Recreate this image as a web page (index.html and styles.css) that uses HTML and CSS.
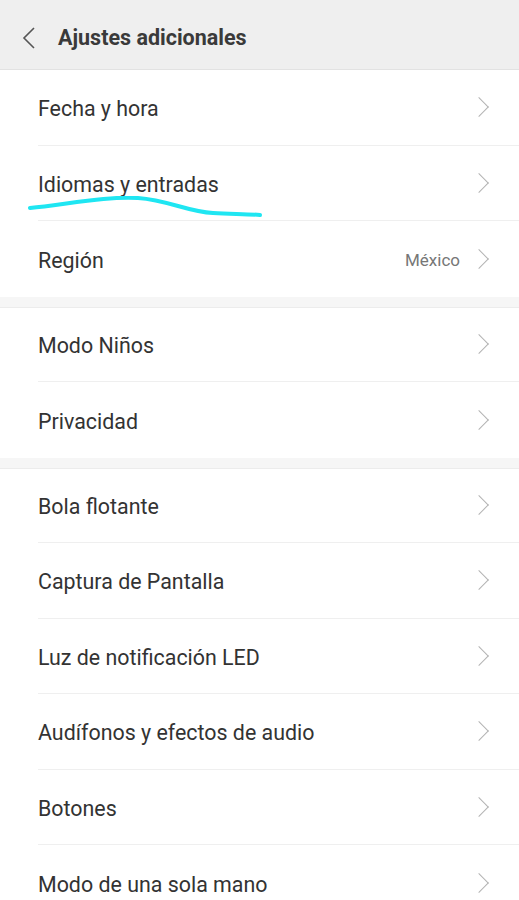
FILE: index.html
```html
<!DOCTYPE html>
<html lang="es">
<head>
  <meta charset="UTF-8" />
  <meta name="viewport" content="width=device-width, initial-scale=1.0" />
  <title>Ajustes adicionales</title>
  <link rel="stylesheet" href="styles.css">
</head>
<body>
  <header class="topbar">
    <svg class="back" width="14" height="22" viewBox="0 0 14 22">
      <path d="M12 1 L2 11 L12 21" fill="none" stroke="#555" stroke-width="1.6" />
    </svg>
    <h1>Ajustes adicionales</h1>
  </header>

  <div class="group">
    <div class="item"><span class="label">Fecha y hora</span><span class="chev"></span></div>
    <div class="item marked">
      <span class="label">Idiomas y entradas</span><span class="chev"></span>
      <svg class="scribble" width="240" height="24" viewBox="0 0 240 24">
        <path d="M2 12 C 40 8, 80 0, 110 2 C 140 4, 160 16, 185 17 C 205 18, 220 18, 232 19" fill="none" stroke="#1fe6f2" stroke-width="4" stroke-linecap="round" />
      </svg>
    </div>
    <div class="item"><span class="label">Región</span><span class="value">México</span><span class="chev"></span></div>
  </div>

  <div class="group">
    <div class="item"><span class="label">Modo Niños</span><span class="chev"></span></div>
    <div class="item"><span class="label">Privacidad</span><span class="chev"></span></div>
  </div>

  <div class="group">
    <div class="item"><span class="label">Bola flotante</span><span class="chev"></span></div>
    <div class="item"><span class="label">Captura de Pantalla</span><span class="chev"></span></div>
    <div class="item"><span class="label">Luz de notificación LED</span><span class="chev"></span></div>
    <div class="item"><span class="label">Audífonos y efectos de audio</span><span class="chev"></span></div>
    <div class="item"><span class="label">Botones</span><span class="chev"></span></div>
    <div class="item"><span class="label">Modo de una sola mano</span><span class="chev"></span></div>
  </div>
</body>
</html>
```

FILE: styles.css
```css
body {
  margin: 0;
  font-family: Roboto, "Noto Sans", sans-serif;
  background: #fff;
  color: #333;
  overflow: hidden;
}

.topbar {
  height: 70px;
  background: #efefef;
  border-bottom: 1px solid #e2e2e2;
  box-sizing: border-box;
  display: flex;
  align-items: center;
  padding: 6px 0 0 22px;
}

.back { margin-right: 22px; }

.topbar h1 {
  margin: 0;
  font-size: 21.5px;
  font-weight: 700;
  color: #3a3a3a;
}

.group {
  border-bottom: 10px solid #f6f6f6;
  box-shadow: 0 1px 0 #ececec inset;
}

.group:first-of-type { box-shadow: none; }

.item {
  position: relative;
  height: 75.5px;
  margin-left: 38px;
  padding: 3px 29px 0 0;
  display: flex;
  align-items: center;
  border-bottom: 1px solid #efefef;
  box-sizing: border-box;
}

.item:last-child { border-bottom: none; }

.label {
  flex: 1;
  font-size: 21.4px;
  color: #333;
}

.value {
  font-size: 17px;
  color: #777;
  margin-right: 12px;
}

.chev {
  width: 13px;
  height: 13px;
  border-top: 1.5px solid #b3b3b3;
  border-right: 1.5px solid #b3b3b3;
  transform: rotate(45deg);
  margin: -3px 4px 0 0;
}

.scribble {
  position: absolute;
  left: -10px;
  top: 50px;
}
```
